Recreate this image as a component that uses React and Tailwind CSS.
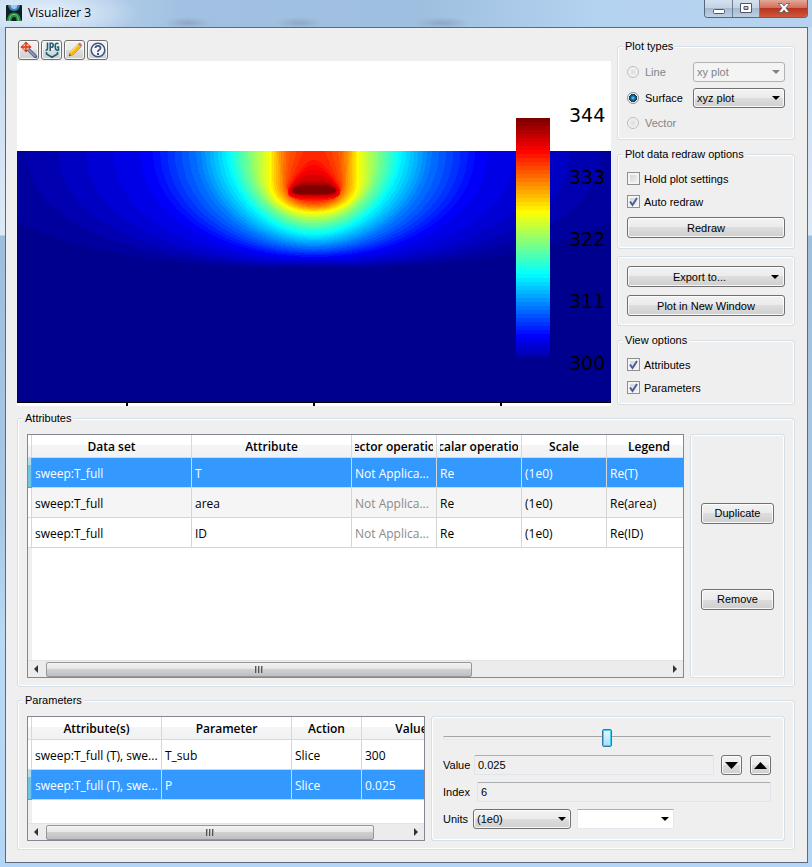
import React from "react";

const BTN =
  "rounded-[3px] border border-[#707070] bg-[linear-gradient(#f2f2f2,#ebebeb_50%,#dddddd_50%,#cfcfcf)] shadow-[inset_0_0_0_1px_rgba(255,255,255,0.8)]";

function jet(t) {
  const ch = (c) => Math.round(255 * Math.max(0, Math.min(1, 1.5 - Math.abs(4 * t - c))));
  return `rgb(${ch(3)},${ch(2)},${ch(1)})`;
}

// Open contours: level, half width at the surface, half width, straight depth, depth, exponent
const OPEN = [
  [0.03, 350, 350, 0, 117, 2.3],
  [0.05, 279, 279, 0, 115, 2.3],
  [0.125, 166, 166, 0, 107, 2.1],
  [0.25, 116, 116, 0, 96, 2],
  [0.375, 87, 87, 0, 84, 1.9],
  [0.5, 65, 65, 8, 72, 2],
  [0.625, 45, 45, 30, 62, 2.1],
  [0.75, 33, 32, 32, 56, 2.2],
  [0.8, 25, 28, 33, 53, 2.2],
  [0.84, 10, 26, 36, 50, 2.3],
];
// Closed contours round the heater: level, top, half width, bottom, squareness
const CLOSED = [
  [0.84, 4, 27, 50, 1.7],
  [0.875, 14, 26, 48, 1.8],
  [0.93, 29, 23, 45, 3],
  [0.96, 33, 22, 44, 5],
  [1, 35, 21, 43, 8],
];

function mix(keys, t) {
  let i = 0;
  while (i < keys.length - 2 && keys[i + 1][0] < t) i += 1;
  const a = keys[i];
  const b = keys[i + 1];
  const k = Math.max(0, Math.min(1, (t - a[0]) / (b[0] - a[0])));
  return a.map((v, j) => v + (b[j] - v - (a[j] - v)) * k);
}

function contour(t) {
  const cx = 297;
  const top = 90;
  const pts = [];
  const arc = (hw, y0, depth, n) => {
    for (let s = 0; s <= 60; s += 1) {
      const a = (Math.PI * s) / 60;
      const c = Math.cos(a);
      const x = cx + Math.sign(c) * hw * Math.pow(Math.abs(c), 2 / n);
      const y = top + y0 + (depth - y0) * Math.pow(Math.abs(Math.sin(a)), 2 / n);
      pts.push(`${x.toFixed(1)},${y.toFixed(1)}`);
    }
  };
  if (t < 0.84) {
    const [, wt, hw, y0, depth, n] = mix(OPEN, t);
    pts.push(`${cx + wt},${top}`);
    arc(hw, y0, depth, n);
    pts.push(`${cx - wt},${top}`);
  } else {
    const [, up, hw, bottom, p] = mix(CLOSED, t);
    const mid = 39;
    arc(hw, mid, bottom, 3);
    for (let s = -20; s <= 20; s += 1) {
      const u = s / 20;
      const y = top + mid - (mid - up) * (1 - Math.pow(Math.abs(u), p));
      pts.push(`${(cx + u * hw).toFixed(1)},${y.toFixed(1)}`);
    }
  }
  return `M${pts.join("L")}Z`;
}

const LEVELS = Array.from({ length: 55 }, (_, i) => 0.03 + (i * 0.97) / 54);
const BANDS = Array.from({ length: 60 }, (_, i) => i);

function Plot() {
  return (
    <svg viewBox="0 0 594 345" className="mt-px block h-auto w-full bg-white" role="img" aria-label="Temperature plot">
      <defs>
        <clipPath id="domain">
          <rect x="0" y="90" width="594" height="252" />
        </clipPath>
      </defs>
      <rect x="0" y="90" width="594" height="252" fill="#00008f" />
      <g clipPath="url(#domain)" shapeRendering="crispEdges">
        {LEVELS.map((t) => (
          <path key={t} d={contour(t)} fill={jet(t)} />
        ))}
      </g>
      <g shapeRendering="crispEdges">
        {BANDS.map((i) => (
          <rect key={i} x="499" y={57 + i * 4} width="34" height={i === 59 ? 3 : 4} fill={jet(1 - (i / 59) * 0.955)} />
        ))}
        <rect x="0" y="341" width="594" height="1" fill="#000" />
        <rect x="109" y="342" width="2" height="3" fill="#000" />
        <rect x="296" y="342" width="2" height="3" fill="#000" />
        <rect x="483" y="342" width="2" height="3" fill="#000" />
      </g>
      <g className="font-['DejaVu_Sans',sans-serif] text-[19px]" fill="#000">
        <text x="552" y="61">344</text>
        <text x="552" y="123">333</text>
        <text x="552" y="185">322</text>
        <text x="552" y="247">311</text>
        <text x="552" y="309">300</text>
      </g>
    </svg>
  );
}

function Group({ title, className = "", children }) {
  return (
    <fieldset className={`min-w-0 rounded-[3px] border border-[#d5dfe5] px-[9px] shadow-[inset_0_0_0_1px_#fff] ${className}`}>
      <legend className="-ml-1 bg-[#efefef] px-[2px]">{title}</legend>
      {children}
    </fieldset>
  );
}

function Panel({ className = "", children }) {
  return (
    <div className={`rounded-[3px] border border-[#d5dfe5] shadow-[inset_0_0_0_1px_#fff] ${className}`}>{children}</div>
  );
}

function Arrow({ className = "" }) {
  return (
    <svg viewBox="0 0 8 4" className={`pointer-events-none h-1 w-2 ${className}`} aria-hidden="true">
      <path d="M0 0H8L4 4Z" fill="currentColor" />
    </svg>
  );
}

function Select({ label, options, disabled, plain, className = "" }) {
  const look = plain
    ? "border border-[#e3e9ef] border-t-[#abadb3] bg-white"
    : disabled
      ? "rounded-[3px] border border-[#adb2b5] bg-[#f4f4f4] text-[#838383]"
      : BTN;
  return (
    <span className={`grid h-5 items-center ${className}`}>
      <select
        aria-label={label}
        disabled={disabled}
        className={`col-start-1 row-start-1 h-5 w-full appearance-none pl-[3px] pr-4 leading-[14px] opacity-100 ${look}`}
      >
        {options.map((o) => (
          <option key={o}>{o}</option>
        ))}
      </select>
      <Arrow className={`col-start-1 row-start-1 mr-[5px] justify-self-end ${disabled ? "text-[#838383]" : "text-black"}`} />
    </span>
  );
}

function Check({ label, checked }) {
  return (
    <label className="flex h-[13px] items-center gap-1">
      <span className="grid size-[13px]">
        <input
          type="checkbox"
          defaultChecked={checked}
          className="peer col-start-1 row-start-1 size-[13px] appearance-none border border-[#8e8f8f] bg-[linear-gradient(135deg,#cbcfd5,#f6f6f6)] shadow-[inset_0_0_0_2px_#f4f4f4]"
        />
        <svg viewBox="0 0 13 13" className="pointer-events-none invisible col-start-1 row-start-1 size-[13px] peer-checked:visible" aria-hidden="true">
          <path d="M3 6.500L5.500 10L10 3" fill="none" stroke="#4b5f9c" strokeWidth="2" />
        </svg>
      </span>
      {label}
    </label>
  );
}

function Radio({ label, checked, disabled, children }) {
  const dot = checked
    ? "border-[#8e8f8f] bg-[radial-gradient(circle_at_50%_50%,#b8ecff_0,#2a9dd0_1px,#0b4b7a_3px,#14364f_4px,#f4f4f4_4px)]"
    : "border-[#bcbcbc] bg-[radial-gradient(circle,#dcdcdc_0,#f4f4f4_5px)]";
  return (
    <div className={`flex items-center justify-between ${disabled ? "text-[#838383]" : ""}`}>
      <label className="flex h-[18px] items-center gap-[6px]">
        <input
          type="radio"
          name="plot-type"
          defaultChecked={checked}
          disabled={disabled}
          className={`size-3 appearance-none rounded-full border ${dot}`}
        />
        {label}
      </label>
      {children}
    </div>
  );
}

function ToolButton({ label, children }) {
  return (
    <button type="button" aria-label={label} className={`flex h-5 w-[21px] items-center justify-center ${BTN}`}>
      <svg viewBox="0 0 18 18" className="size-[18px]" aria-hidden="true">
        {children}
      </svg>
    </button>
  );
}

function ScrollBar({ thumb, rest }) {
  return (
    <div className="flex h-[17px] items-center border-t border-[#e3e3e3] bg-[#ececec]" aria-hidden="true">
      <svg viewBox="0 0 18 8" className="h-2 w-[18px] shrink-0">
        <path d="M10 0V8L6 4Z" fill="#333" />
      </svg>
      <div
        className={`flex h-[15px] basis-0 items-center justify-center gap-px rounded-[2px] border border-[#979797] bg-[linear-gradient(#f3f3f3,#e6e6e6_45%,#d0d0d2_50%,#bfbfc3)] ${thumb}`}
      >
        <span className="h-[7px] w-[2px] border-l border-[#555] bg-[#aaa]" />
        <span className="h-[7px] w-[2px] border-l border-[#555] bg-[#aaa]" />
        <span className="h-[7px] w-[2px] border-l border-[#555] bg-[#aaa]" />
      </div>
      <div className={`flex basis-0 justify-end ${rest}`}>
        <svg viewBox="0 0 14 8" className="h-2 w-[14px]">
          <path d="M4 0V8L8 4Z" fill="#333" />
        </svg>
      </div>
    </div>
  );
}

const HEAD = "border-b border-r border-[#d8d8d8] bg-[linear-gradient(#fff,#fff_45%,#f4f5f7_45%,#f1f2f4)]";

function Grid({ label, width, columns, rows, selected, thumb, rest }) {
  return (
    <div className="flex h-full min-w-0 flex-col border border-[#828790] bg-white font-['Open_Sans','Noto_Sans',sans-serif] text-[12px] leading-4">
      <div className="min-h-0 flex-1 overflow-hidden bg-[linear-gradient(to_right,#efefef_4px,#fff_4px)]">
        <table aria-label={label} className={`table-fixed border-separate border-spacing-0 ${width}`}>
          <colgroup>
            <col className="w-1" />
            {columns.map((c) => (
              <col key={c.name} className={c.width} />
            ))}
          </colgroup>
          <thead>
            <tr className="h-[23px]">
              <td className={`p-0 ${HEAD}`} />
              {columns.map((c) => (
                <th key={c.name} scope="col" className={`px-[3px] pb-0 pt-[2px] font-semibold ${HEAD}`}>
                  <div className="flex justify-center overflow-hidden whitespace-nowrap">
                    <span>{c.name}</span>
                  </div>
                </th>
              ))}
            </tr>
          </thead>
          <tbody>
            {rows.map((r, i) => {
              const on = i === selected;
              return (
                <tr key={r.join()} className={`h-[30px] ${on ? "bg-[#3399ff] text-white" : i % 2 ? "bg-[#f5f5f5]" : "bg-white"}`}>
                  <td
                    className={`border-b border-r p-0 ${on ? "border-[#5a9fc0] bg-[linear-gradient(#b4dcea_25%,#6fc4e4_25%)]" : "border-[#d8d8d8] bg-white"}`}
                  />
                  {r.map((v, j) => (
                    <td
                      key={columns[j].name}
                      className={`truncate border-b border-r border-[#d5d5d5] px-[3px] pb-0 pt-[2px] ${columns[j].muted && !on ? "text-[#8a8a8a]" : ""}`}
                    >
                      {v}
                    </td>
                  ))}
                </tr>
              );
            })}
          </tbody>
        </table>
      </div>
      <ScrollBar thumb={thumb} rest={rest} />
    </div>
  );
}

const ATTRIBUTE_COLUMNS = [
  { name: "Data set", width: "w-[160px]" },
  { name: "Attribute", width: "w-[160px]" },
  { name: "Vector operation", width: "w-[85px]", muted: true },
  { name: "Scalar operation", width: "w-[85px]" },
  { name: "Scale", width: "w-[85px]" },
  { name: "Legend", width: "w-[85px]" },
];
const ATTRIBUTE_ROWS = [
  ["sweep:T_full", "T", "Not Applica...", "Re", "(1e0)", "Re(T)"],
  ["sweep:T_full", "area", "Not Applica...", "Re", "(1e0)", "Re(area)"],
  ["sweep:T_full", "ID", "Not Applica...", "Re", "(1e0)", "Re(ID)"],
];
const PARAMETER_COLUMNS = [
  { name: "Attribute(s)", width: "w-[130px]" },
  { name: "Parameter", width: "w-[130px]" },
  { name: "Action", width: "w-[70px]" },
  { name: "Value", width: "w-[100px]" },
];
const PARAMETER_ROWS = [
  ["sweep:T_full (T), swe...", "T_sub", "Slice", "300"],
  ["sweep:T_full (T), swe...", "P", "Slice", "0.025"],
];

const FIELD = "h-5 min-w-0 flex-1 rounded-[2px] border border-[#dfe4ea] border-t-[#abadb3] bg-[#efefef] pl-[3px]";

function TitleBar() {
  return (
    <header className="flex h-[27px] items-start justify-between">
      <div className="flex h-[26px] items-center gap-[6px]">
        <svg viewBox="0 0 16 16" className="ml-px size-4" aria-hidden="true">
          <rect width="16" height="16" rx="1" fill="#10201f" />
          <path d="M2 0H14C13.500 3 12 6 8 6S2.500 3 2 0Z" fill="#3f7fb8" />
          <path d="M4.500 0H11.500C11 2.500 10 4 8 4S5 2.500 4.500 0Z" fill="#9ccbf0" />
          <path d="M1 16C1.500 11 3.500 7.500 8 7.500S14.500 11 15 16H10.500C10.500 13.500 9.500 12 8 12S5.500 13.500 5.500 16Z" fill="#2c8a48" />
          <path d="M3.500 16C3.500 12 5 9.500 8 9.500S12.500 12 12.500 16" fill="none" stroke="#62cf7c" />
        </svg>
        <h1 className="font-['Open_Sans','Noto_Sans',sans-serif] text-[12px] leading-4">Visualizer 3</h1>
      </div>
      <div className="flex h-[18px] overflow-hidden rounded-b-[4px] border border-t-0 border-[#57677a]">
        <button
          type="button"
          aria-label="Minimize"
          className="flex w-7 items-center justify-center border-r border-[#6c7f94] bg-[linear-gradient(#d4e1ef,#c3d3e5_45%,#a3b8cf_45%,#bdd1e5)]"
        >
          <svg viewBox="0 0 12 12" className="size-3" aria-hidden="true">
            <rect x="0.5" y="6.5" width="11" height="4" rx="1" fill="#fff" stroke="#535666" />
          </svg>
        </button>
        <button
          type="button"
          aria-label="Maximize"
          className="flex w-[27px] items-center justify-center border-r border-[#6c7f94] bg-[linear-gradient(#d4e1ef,#c3d3e5_45%,#a3b8cf_45%,#bdd1e5)]"
        >
          <svg viewBox="0 0 12 12" className="size-3" aria-hidden="true">
            <path fillRule="evenodd" d="M0.500 0.500H11.500V9.500H0.500ZM4 3.500V6.500H8V3.500Z" fill="#fff" stroke="#535666" />
          </svg>
        </button>
        <button
          type="button"
          aria-label="Close"
          className="flex w-[47px] items-center justify-center bg-[linear-gradient(#e3a899,#d0705c_45%,#b8301a_45%,#d1583b)]"
        >
          <svg viewBox="0 0 12 12" className="size-3" aria-hidden="true">
            <path d="M0.500 0.500H4L6 3L8 0.500H11.500L8 5L11.500 9.500H8L6 7L4 9.500H0.500L4 5Z" fill="#fff" stroke="#535666" strokeWidth="0.8" />
          </svg>
        </button>
      </div>
    </header>
  );
}

export default function App() {
  return (
    <div className="flex min-h-screen w-full flex-col bg-[#b5d5f2] bg-[linear-gradient(to_bottom,#c3d9f0,#dce9f6_235px,#9dbfdd_236px,#a8c8e6_520px,#b9daf5_640px,#b3d6f6)] font-['Liberation_Sans',Arial,sans-serif] text-[11px] leading-[14px] text-black">
      <div className="flex flex-1 flex-col bg-[radial-gradient(ellipse_24px_6px_at_188px_23px,#8fa9c6,transparent),radial-gradient(ellipse_24px_6px_at_299px_23px,#8fa9c6,transparent),radial-gradient(ellipse_28px_6px_at_442px_23px,#8fa9c6,transparent),radial-gradient(ellipse_90px_26px_at_50px_13px,#e6f1fb,transparent),linear-gradient(to_right,#c6dcf2,#a2c1e2_180px,#9fbfe0_420px,#b4d3f1_600px,#b6d2ee)] bg-[length:100%_27px] bg-no-repeat pb-1 pl-[5px] pr-1">
        <TitleBar />
        <main className="flex flex-1 flex-col border border-[#5b6b7c] bg-[#efefef] pb-[11px] pl-[11px] pr-3 pt-[11px]">
          <div className="grid grid-cols-[minmax(0,1fr)_178px] gap-[6px]">
            <section className="pt-px">
              <div className="flex gap-[2px] pl-px">
                <ToolButton label="Zoom">
                  <path d="M8.500 8.500L15.500 15.500" stroke="#4d608c" strokeWidth="3.500" strokeLinecap="round" />
                  <path d="M9 9L15 15" stroke="#93a5c8" strokeWidth="1.500" strokeLinecap="round" />
                  <circle cx="6" cy="6" r="3.500" fill="#f3c2b0" stroke="#d9694b" />
                  <path d="M6 1V11M1 6H11" stroke="#d8391b" strokeWidth="1.300" />
                  <path d="M4 3L6 0.500L8 3ZM4 9L6 11.500L8 9ZM3 4L0.500 6L3 8ZM9 4L11.500 6L9 8Z" fill="#d8391b" />
                </ToolButton>
                <ToolButton label="Save as JPG">
                  <g fill="none" stroke="#1f6079" strokeWidth="1.600">
                    <path d="M4.500 1.500V7.500Q4.500 9.200 2.500 9.200" />
                    <path d="M7.200 10V2.200H8.500Q10.200 2.200 10.200 4.200T8.500 6.200H7.200" />
                    <path d="M15.500 2.800Q12.200 1 12.200 5.500T15.500 9V6H13.800" />
                    <path d="M3.500 11V13L9 16.200L14.500 13V11" />
                  </g>
                </ToolButton>
                <ToolButton label="Edit">
                  <path d="M3 15L4 11L12 3L15 6L7 14Z" fill="#f5b80c" stroke="#c98a10" strokeWidth="0.600" />
                  <path d="M4.500 11.500L12.500 3.500" stroke="#ffe36b" strokeWidth="1.200" />
                  <path d="M12 3L13.200 1.800Q14 1.500 15 2.500T16 4.800L15 6Z" fill="#c7749b" />
                  <path d="M3 15L3.500 13L5 14.500Z" fill="#4a3520" />
                </ToolButton>
                <ToolButton label="Help">
                  <circle cx="9" cy="9" r="6.800" fill="#f4f6fa" stroke="#3d5580" strokeWidth="1.500" />
                  <path d="M6.500 7Q6.500 4.800 9 4.800T11.500 7Q11.500 8.200 10 9T9 11" fill="none" stroke="#3d5580" strokeWidth="1.800" />
                  <rect x="8" y="12" width="2" height="2" fill="#3d5580" />
                </ToolButton>
              </div>
              <Plot />
            </section>

            <aside className="flex flex-col">
              <Group title="Plot types" className="pb-[7px] pt-[9px]">
                <div className="flex flex-col gap-[6px]">
                  <Radio label="Line" disabled>
                    <Select label="Line plot" options={["xy plot"]} disabled className="w-[92px]" />
                  </Radio>
                  <Radio label="Surface" checked>
                    <Select label="Surface plot" options={["xyz plot"]} className="w-[92px]" />
                  </Radio>
                  <Radio label="Vector" disabled />
                </div>
              </Group>
              <Group title="Plot data redraw options" className="mt-[7px] pb-[10px] pt-[11px]">
                <div className="flex flex-col gap-[10px]">
                  <Check label="Hold plot settings" />
                  <Check label="Auto redraw" checked />
                </div>
                <button type="button" className={`mt-[9px] block h-[21px] w-full ${BTN}`}>
                  Redraw
                </button>
              </Group>
              <Panel className="mt-[7px] flex flex-col gap-2 p-[9px]">
                <button type="button" className={`flex h-[21px] w-full items-center pr-[5px] ${BTN}`}>
                  <span className="flex-1">Export to...</span>
                  <Arrow />
                </button>
                <button type="button" className={`h-[21px] w-full ${BTN}`}>
                  Plot in New Window
                </button>
              </Panel>
              <Group title="View options" className="mt-[7px] pb-[10px] pt-[11px]">
                <div className="flex flex-col gap-[10px]">
                  <Check label="Attributes" checked />
                  <Check label="Parameters" checked />
                </div>
              </Group>
            </aside>
          </div>

          <Group title="Attributes" className="mt-[5px] pb-2 pt-[9px]">
            <div className="grid h-[244px] grid-cols-[minmax(0,1fr)_95px] gap-[6px]">
              <Grid
                label="Attributes"
                width="w-[664px]"
                columns={ATTRIBUTE_COLUMNS}
                rows={ATTRIBUTE_ROWS}
                selected={0}
                thumb="grow-[425]"
                rest="grow-[212]"
              />
              <Panel className="flex flex-col items-stretch justify-center gap-[65px] px-[10px]">
                <button type="button" className={`h-[21px] ${BTN}`}>
                  Duplicate
                </button>
                <button type="button" className={`h-[21px] ${BTN}`}>
                  Remove
                </button>
              </Panel>
            </div>
          </Group>

          <Group title="Parameters" className="mt-[6px] pb-2 pt-[9px]">
            <div className="grid h-[125px] grid-cols-[minmax(0,398fr)_minmax(0,354fr)] gap-[6px]">
              <Grid
                label="Parameters"
                width="w-[434px]"
                columns={PARAMETER_COLUMNS}
                rows={PARAMETER_ROWS}
                selected={1}
                thumb="grow-[328]"
                rest="grow-[50]"
              />
              <Panel className="flex flex-col gap-[7px] pb-[10px] pl-[11px] pr-[13px] pt-[11px]">
                <input
                  type="range"
                  aria-label="Parameter value"
                  min="0"
                  max="12"
                  defaultValue="6"
                  className="h-5 w-full appearance-none bg-transparent [&::-webkit-slider-runnable-track]:h-1 [&::-webkit-slider-runnable-track]:border [&::-webkit-slider-runnable-track]:border-[#e3e9ee] [&::-webkit-slider-runnable-track]:border-t-[#a5a5a5] [&::-webkit-slider-thumb]:-mt-2 [&::-webkit-slider-thumb]:h-[18px] [&::-webkit-slider-thumb]:w-[10px] [&::-webkit-slider-thumb]:appearance-none [&::-webkit-slider-thumb]:rounded-[2px] [&::-webkit-slider-thumb]:border [&::-webkit-slider-thumb]:border-[#2f79a8] [&::-webkit-slider-thumb]:bg-[linear-gradient(#e8f8ff,#a8dcf5)] [&::-webkit-slider-thumb]:shadow-[inset_0_0_0_1px_#3fd0f5]"
                />
                <div className="flex items-center">
                  <label htmlFor="value" className="w-[31px]">
                    Value
                  </label>
                  <input id="value" readOnly defaultValue="0.025" className={FIELD} />
                  <button type="button" aria-label="Decrease" className={`ml-[7px] flex h-5 w-[21px] items-center justify-center ${BTN}`}>
                    <svg viewBox="0 0 13 7" className="h-[7px] w-[13px]" aria-hidden="true">
                      <path d="M0 0H13L6.500 7Z" />
                    </svg>
                  </button>
                  <button type="button" aria-label="Increase" className={`ml-2 flex h-5 w-[21px] items-center justify-center ${BTN}`}>
                    <svg viewBox="0 0 13 7" className="h-[7px] w-[13px]" aria-hidden="true">
                      <path d="M0 7H13L6.500 0Z" />
                    </svg>
                  </button>
                </div>
                <div className="flex items-center">
                  <label htmlFor="index" className="w-[34px]">
                    Index
                  </label>
                  <input id="index" readOnly defaultValue="6" className={FIELD} />
                </div>
                <div className="flex items-center">
                  <span className="w-[30px]">Units</span>
                  <Select label="Units" options={["(1e0)"]} className="w-[98px]" />
                  <Select label="Unit name" options={[""]} plain className="ml-[6px] w-[97px]" />
                </div>
              </Panel>
            </div>
          </Group>
        </main>
      </div>
    </div>
  );
}
